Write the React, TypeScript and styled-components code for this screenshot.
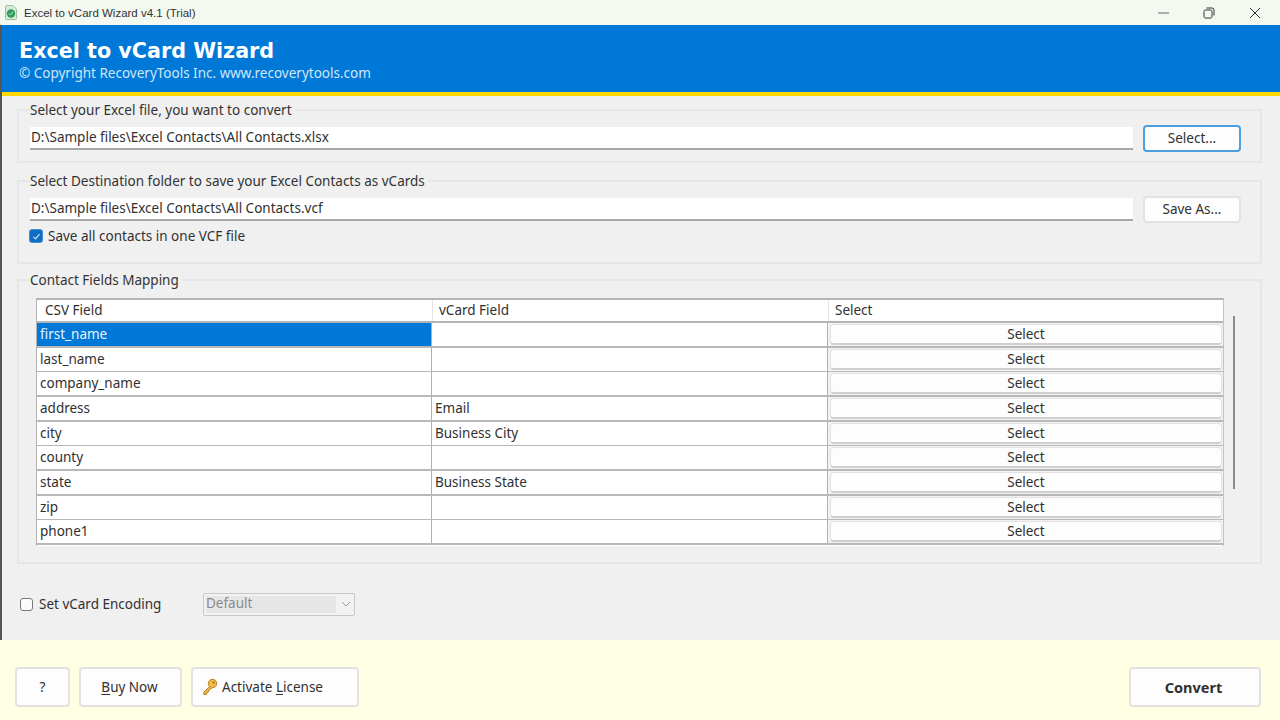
import React from "react";
import styled, { createGlobalStyle } from "styled-components";

const Global = createGlobalStyle`
  html, body { margin: 0; padding: 0; background: #f0f0f0; }
  * { box-sizing: border-box; }
  body { font-family: "Noto Sans", sans-serif; font-size: 13.5px; color: #303030; }
`;

const Window = styled.div`
  width: 1280px; height: 720px; display: flex; flex-direction: column; overflow: hidden;
  position: relative; background: #f0f0f0;
`;
const Edge = styled.div`
  position: absolute; left: 0; top: 25px; bottom: 80px; width: 1.5px; background: #555;
`;
const TitleBar = styled.div`
  height: 25px; flex: none; display: flex; align-items: center; background: #f3f8f0; padding: 0 2px 0 5px;
  font-family: "Liberation Sans", sans-serif; font-size: 11.5px; color: #333;
`;
const TitleText = styled.span`margin-left: 7px; flex: 1;`;
const WinBtn = styled.div<{ $w: number }>`
  width: ${(p) => p.$w}px; height: 25px; display: flex; align-items: center; justify-content: center;
`;
const Banner = styled.header`
  height: 71px; flex: none; background: #0078d7; border-bottom: 4px solid #ffd800;
  padding: 12px 0 0 19px; color: #fff;
`;
const BannerTitle = styled.div`
  font-family: "DejaVu Sans", sans-serif; font-weight: 700; font-size: 20.7px; line-height: 28px;
`;
const BannerSub = styled.div`font-size: 13.5px; line-height: 17px; color: #cfe6f8;`;
const Content = styled.main`
  flex: 1; padding: 5px 18px 0 17px; display: flex; flex-direction: column;
`;
const Group = styled.fieldset<{ $h: number; $mt: number }>`
  margin: ${(p) => p.$mt}px 0 0; padding: 0 19px 0 11px; height: ${(p) => p.$h}px; min-width: 0;
  border: 2px solid #e6e6e6;
`;
const Legend = styled.legend`
  padding: 0 3px 0 0; line-height: 18px; color: #333;
`;
const FileRow = styled.div`
  display: flex; align-items: center; justify-content: space-between; padding-top: 6px;
`;
const PathInput = styled.div`
  width: 1103px; height: 23px; background: #fff; border-bottom: 2px solid #a8a8a8;
  padding-left: 1px; line-height: 20px;
`;
const Btn = styled.button<{ $focus?: boolean; $bold?: boolean; $w?: number }>`
  font: inherit; color: #303030; background: #fdfdfd; cursor: default; padding: 0;
  width: ${(p) => p.$w ?? 98}px;
  border: ${(p) => (p.$focus ? "2px solid #4a9fe3" : "2px solid #e2e2e2")};
  border-radius: 4px; font-weight: ${(p) => (p.$bold ? 700 : 400)};
  ${(p) => (p.$bold ? "font-size: 14.5px;" : "")}
`;
const SideBtn = styled(Btn)`height: 27px; padding-bottom: 2px;`;
const CheckRow = styled.label<{ $mt?: number; $w?: number }>`
  display: flex; align-items: center; gap: 6px; margin-top: ${(p) => p.$mt ?? 0}px; line-height: 18px;
  ${(p) => (p.$w ? `width: ${p.$w}px;` : "")}
`;
const Box = styled.span`
  width: 13px; height: 13px; border-radius: 3px; display: inline-flex; align-items: center; justify-content: center;
  background: #fafafa; border: 1px solid #777;
`;
const CheckedBox = styled(Box)`
  width: 14px; height: 14px; margin: 0 -1px 0 -1px; background: #0f6cc0; border-color: #3f8fd6;
`;
const Table = styled.div`
  margin: 9px 0 0 6px; width: 1188px; height: 248px; overflow: hidden; background: #fff;
  border-top: 2px solid #b4b4b4; border-left: 1px solid #b4b4b4; border-right: 1px solid #c4c4c4;
`;
const HeadRow = styled.div`
  display: grid; grid-template-columns: 395px 396px 1fr; height: 23px; border-bottom: 2px solid #b4b4b4;
  line-height: 21px;
`;
const HeadCell = styled.div`padding-left: 6px; border-left: 1px solid #e4e4e4; &:first-child { border-left: 0; padding-left: 8px; }`;
const Row = styled.div<{ $h: number }>`
  display: grid; grid-template-columns: 395px 396px 1fr; height: ${(p) => p.$h}px; border-bottom: 2px solid #b8b8b8;
`;
const Cell = styled.div<{ $sel?: boolean }>`
  padding-left: 3px; line-height: 23px; border-right: 1px solid #b0b0b0;
  background: ${(p) => (p.$sel ? "#0078d7" : "#fff")};
  color: ${(p) => (p.$sel ? "#e8f3fc" : "#303030")};
`;
const ActionCell = styled.div`padding: 1px 1px 0 2px; background: #f2f2f2;`;
const RowBtn = styled(Btn)`
  width: 100%; height: 21px; display: block; line-height: 17px; border-width: 1px;
  border-color: #e2e2e2 #e2e2e2 #cfcfcf; border-bottom-width: 2px;
`;
const TableWrap = styled.div`position: relative;`;
const Scrollbar = styled.div`
  position: absolute; left: 1203px; top: 18px; width: 2px; height: 173px; background: #8a8a8a;
`;
const EncodingRow = styled.div`
  display: flex; align-items: center; margin: 28px 0 0 3px; height: 24px;
`;
const Combo = styled.div`
  width: 152px; height: 23px; border: 1px solid #c8c8c8; border-radius: 2px; background: #f2f2f2;
  padding: 2px; display: flex; align-items: center; justify-content: space-between; color: #8a8a8a;
`;
const ComboValue = styled.span`
  width: 130px; height: 17px; line-height: 14px; background: #e6e6e6;
`;
const Footer = styled.footer`
  flex: none; height: 80px; background: #ffffe3; padding: 27px 19px 0 15px; display: flex; gap: 9px;
`;
const FootBtn = styled(Btn)<{ $pr?: number }>`
  height: 40px; display: flex; align-items: center; justify-content: center; gap: 4px;
  padding-right: ${(p) => p.$pr ?? 0}px;
`;
const ActivateBtn = styled(FootBtn)`justify-content: flex-start; padding-left: 9px;`;
const Spacer = styled.div`flex: 1;`;
const U = styled.span`text-decoration: underline; text-underline-offset: 2px;`;

const rows: [string, string][] = [
  ["first_name", ""], ["last_name", ""], ["company_name", ""], ["address", "Email"],
  ["city", "Business City"], ["county", ""], ["state", "Business State"], ["zip", ""], ["phone1", ""],
];
const rowHeight = (i: number) => Math.round((i + 1) * 24.67) - Math.round(i * 24.67);

const AppIcon = () => (
  <svg width="12" height="15" viewBox="0 0 12 15">
    <path d="M.5 1.5a1 1 0 0 1 1-1h6L11.5 4v9.5a1 1 0 0 1-1 1h-9a1 1 0 0 1-1-1z" fill="#d8ead8" stroke="#9bbf9b" />
    <circle cx="6" cy="8.5" r="4.2" fill="#2e9b57" />
    <path d="M4 8.5l1.5 1.5 2.5-3" stroke="#c8efd4" fill="none" />
  </svg>
);
const KeyIcon = () => (
  <svg width="16" height="18" viewBox="0 0 16 18">
    <circle cx="10.5" cy="5.5" r="4.2" fill="#f0b948" stroke="#b98423" />
    <circle cx="11.5" cy="4.5" r="1" fill="#8f6518" />
    <path d="M8 8 1.5 14.5 2 16.5 4.5 16.5 5 14.5 6.5 14 7 12.2 10 10" fill="#eeb344" stroke="#b98423" strokeLinejoin="round" />
  </svg>
);

export default function App() {
  return (
    <Window>
      <Global />
      <TitleBar>
        <AppIcon />
        <TitleText>Excel to vCard Wizard v4.1 (Trial)</TitleText>
        <WinBtn $w={45}>
          <svg width="12" height="2" viewBox="0 0 12 2"><path d="M0 1h11" stroke="#666" /></svg>
        </WinBtn>
        <WinBtn $w={45}>
          <svg width="12" height="12" viewBox="0 0 12 12" fill="none" stroke="#333">
            <rect x="1" y="3" width="8" height="8" rx="1.5" /><path d="M3.5 1H9a2 2 0 0 1 2 2v5.5" />
          </svg>
        </WinBtn>
        <WinBtn $w={47}>
          <svg width="12" height="12" viewBox="0 0 12 12" stroke="#333"><path d="M1 1l10 10M11 1 1 11" /></svg>
        </WinBtn>
      </TitleBar>
      <Banner>
        <BannerTitle>Excel to vCard Wizard</BannerTitle>
        <BannerSub>© Copyright RecoveryTools Inc. www.recoverytools.com</BannerSub>
      </Banner>
      <Content>
        <Group $h={62} $mt={0}>
          <Legend>Select your Excel file, you want to convert</Legend>
          <FileRow>
            <PathInput>D:\Sample files\Excel Contacts\All Contacts.xlsx</PathInput>
            <SideBtn $focus>Select...</SideBtn>
          </FileRow>
        </Group>
        <Group $h={92} $mt={9}>
          <Legend>Select Destination folder to save your Excel Contacts as vCards</Legend>
          <FileRow>
            <PathInput>D:\Sample files\Excel Contacts\All Contacts.vcf</PathInput>
            <SideBtn>Save As...</SideBtn>
          </FileRow>
          <CheckRow $mt={4}>
            <CheckedBox>
              <svg width="9" height="9" viewBox="0 0 9 9" fill="none" stroke="#cfe4f6" strokeWidth="1.2"><path d="M1.5 4.8 3.5 6.8 7.5 2.2" /></svg>
            </CheckedBox>
            Save all contacts in one VCF file
          </CheckRow>
        </Group>
        <Group $h={293} $mt={7}>
          <Legend>Contact Fields Mapping</Legend>
          <TableWrap>
            <Table>
              <HeadRow>
                <HeadCell>CSV Field</HeadCell>
                <HeadCell>vCard Field</HeadCell>
                <HeadCell>Select</HeadCell>
              </HeadRow>
              {rows.map(([a, b], i) => (
                <Row key={a} $h={rowHeight(i)}>
                  <Cell $sel={i === 0}>{a}</Cell>
                  <Cell>{b}</Cell>
                  <ActionCell><RowBtn>Select</RowBtn></ActionCell>
                </Row>
              ))}
            </Table>
            <Scrollbar />
          </TableWrap>
        </Group>
        <EncodingRow>
          <CheckRow $w={183}>
            <Box />
            Set vCard Encoding
          </CheckRow>
          <Combo>
            <ComboValue>Default</ComboValue>
            <svg width="12" height="12" viewBox="0 0 12 12" fill="none" stroke="#999"><path d="M2 4l4 4 4-4" /></svg>
          </Combo>
        </EncodingRow>
      </Content>
      <Footer>
        <FootBtn $w={55}>?</FootBtn>
        <FootBtn $w={103} $pr={2}><span><U>B</U>uy Now</span></FootBtn>
        <ActivateBtn $w={168}><KeyIcon /><span>Activate <U>L</U>icense</span></ActivateBtn>
        <Spacer />
        <FootBtn $w={132} $pr={3} $bold>Convert</FootBtn>
      </Footer>
      <Edge />
    </Window>
  );
}
